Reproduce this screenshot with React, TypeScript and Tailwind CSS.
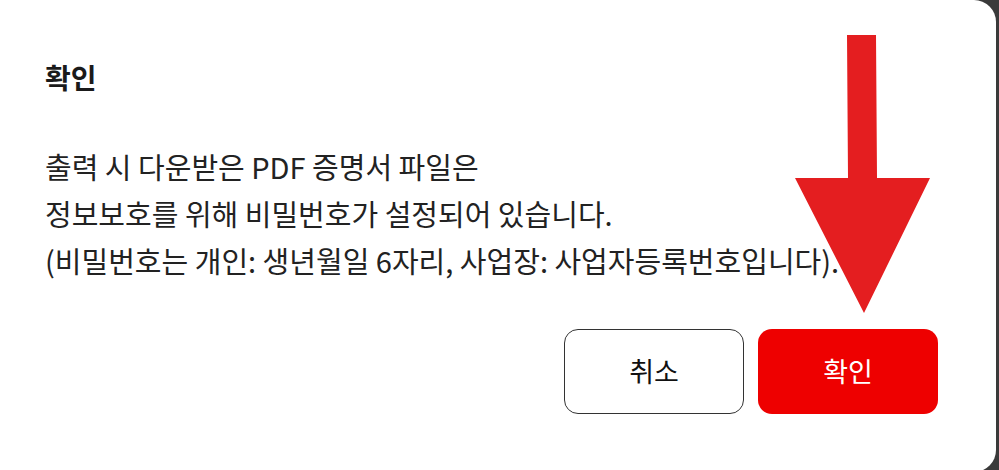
import React from "react";

const font = { fontFamily: '"Noto Sans CJK KR", "Noto Sans", sans-serif' };

// 안내 화살표 (확인 버튼 가리킴)
function PointerArrow() {
  return (
    <svg
      className="pointer-events-none absolute left-[790px] top-[30px]"
      width="150"
      height="290"
      viewBox="0 0 150 290"
    >
      <polygon
        points="57,5 86,5 87,148 140,148 74,283 5,148 58,148"
        fill="#e41e20"
      />
    </svg>
  );
}

export default function App() {
  return (
    <div className="h-[470px] w-[999px] overflow-hidden bg-[#3a3a3a]" style={font}>
      <div className="relative flex h-[472px] w-[996px] flex-col rounded-r-[22px] bg-white pl-[45px] pr-[58px]">
        {/* 제목 */}
        <h2 className="mt-[57px] text-[28px] font-bold leading-[40px] text-[#1a1a1a]">확인</h2>

        {/* 본문 */}
        <div className="mt-[46px] text-[29px] leading-[47px] text-[#222]">
          <p>출력 시 다운받은 PDF 증명서 파일은</p>
          <p>정보보호를 위해 비밀번호가 설정되어 있습니다.</p>
          <p>(비밀번호는 개인: 생년월일 6자리, 사업장: 사업자등록번호입니다).</p>
        </div>

        {/* 버튼 */}
        <div className="mt-[45px] flex justify-end gap-[14px]">
          <button className="h-[85px] w-[180px] rounded-[14px] border border-[#333] bg-white text-[27px] text-[#111]">
            취소
          </button>
          <button className="h-[85px] w-[180px] rounded-[14px] bg-[#ee0000] text-[27px] text-white">
            확인
          </button>
        </div>

        <PointerArrow />
      </div>
    </div>
  );
}
